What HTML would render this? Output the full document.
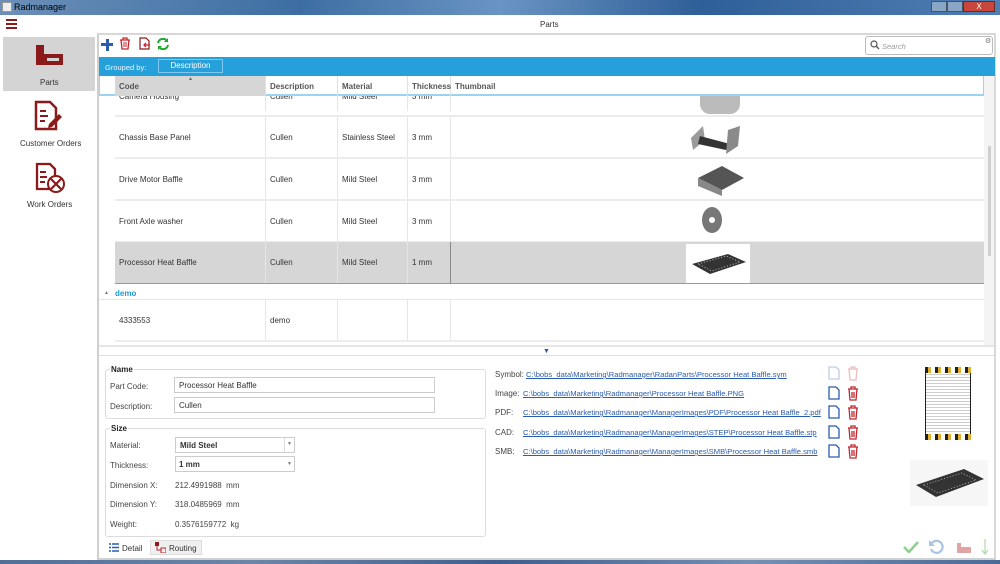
<!DOCTYPE html>
<html><head><meta charset="utf-8"><style>
*{margin:0;padding:0;box-sizing:border-box}
body{width:1000px;height:564px;overflow:hidden;background:#fff;font-family:"Liberation Sans",sans-serif;font-size:8px;color:#333;position:relative}
.a{position:absolute}
.t{position:absolute;white-space:nowrap}
.lnk{color:#2a5db0;text-decoration:underline;font-size:7.6px}
.hd{position:absolute;top:76px;height:20px;border-right:1px solid #e0e0e0;font-weight:bold;color:#555;padding:6px 4px;font-size:8px}
.row{position:absolute;left:115px;width:869px;border-bottom:2px solid #ececec}
.c{position:absolute;top:0;height:100%;border-right:1px solid #e6e6e6;padding-left:4px;display:flex;align-items:center;font-size:8px;color:#333}
.lbl{position:absolute;font-size:8px;color:#444}
.box{position:absolute;border:1px solid #dcdcdc;border-radius:3px}
</style></head><body>
<div class="a" style="left:0;top:0;width:1000px;height:15px;background:linear-gradient(90deg,#6b8fb8 0%,#3d6ea3 30%,#6a94c2 50%,#2f5f98 70%,#4f7eb3 100%)"></div>
<div class="a" style="left:2px;top:2px;width:10px;height:10px;background:#eee;border:1px solid #999"></div>
<div class="t" style="left:14px;top:2px;font-size:9px;color:#000">Radmanager</div>
<div class="a" style="left:931px;top:1px;width:16px;height:11px;background:#8aa6c6;border:1px solid #456"></div>
<div class="a" style="left:947px;top:1px;width:16px;height:11px;background:#8aa6c6;border:1px solid #456"></div>
<div class="a" style="left:963px;top:1px;width:32px;height:11px;background:#c8463a;border:1px solid #6a2a22;color:#fff;font-size:8px;text-align:center;line-height:9px">X</div>
<div class="a" style="left:6px;top:19px;width:11px;height:2px;background:#8b1a1a"></div>
<div class="a" style="left:6px;top:23px;width:11px;height:2px;background:#8b1a1a"></div>
<div class="a" style="left:6px;top:27px;width:11px;height:2px;background:#8b1a1a"></div>
<div class="t" style="left:540px;top:20px;font-size:8px">Parts</div>
<div class="a" style="left:3px;top:37px;width:92px;height:54px;background:#d4d4d4"></div>
<div class="a" style="left:36px;top:45px;width:8px;height:20px;background:#8b1a1a"></div>
<div class="a" style="left:36px;top:54px;width:27px;height:11px;background:#8b1a1a"></div>
<div class="a" style="left:47px;top:58px;width:12px;height:3px;background:#d4d4d4"></div>
<div class="t" style="left:40px;top:78px">Parts</div>
<svg class="a" style="left:33px;top:100px" width="32" height="32" viewBox="0 0 32 32"><path d="M3 2h14l6 6v21H3z" fill="none" stroke="#8b1a1a" stroke-width="2.5"/><path d="M7 11h6M7 16h8M7 21h5" stroke="#8b1a1a" stroke-width="2"/><path d="M16 24l10-10 3 3-10 10-4 1z" fill="#8b1a1a"/></svg>
<div class="t" style="left:20px;top:139px">Customer Orders</div>
<svg class="a" style="left:34px;top:162px" width="32" height="32" viewBox="0 0 32 32"><path d="M3 2h13l5 5v20H3z" fill="none" stroke="#8b1a1a" stroke-width="2.3"/><path d="M6 10h6M6 15h7M6 20h5" stroke="#8b1a1a" stroke-width="2"/><circle cx="22" cy="22" r="8" fill="#fff" stroke="#8b1a1a" stroke-width="2"/><path d="M17 17l10 10M27 17l-10 10" stroke="#8b1a1a" stroke-width="2.2"/></svg>
<div class="t" style="left:27px;top:200px">Work Orders</div>
<div class="a" style="left:97px;top:33px;width:2px;height:531px;background:#cfcfcf"></div>
<div class="a" style="left:98px;top:33px;width:898px;height:2px;background:#d8d8d8"></div>
<div class="a" style="left:994px;top:33px;width:2px;height:527px;background:#d8d8d8"></div>
<div class="a" style="left:101px;top:43px;width:12px;height:3px;background:#2a5db0"></div>
<div class="a" style="left:105.5px;top:38.5px;width:3px;height:12px;background:#2a5db0"></div>
<svg class="a" style="left:119px;top:37px" width="12" height="13" viewBox="0 0 12 13"><path d="M1 3h10M4 3V1h4v2M2 3l1 9h6l1-9" fill="none" stroke="#c0262d" stroke-width="1.3"/><path d="M5 5v5M7 5v5" stroke="#c0262d"/></svg>
<svg class="a" style="left:138px;top:37px" width="13" height="13" viewBox="0 0 13 13"><path d="M2 1h6l3 3v8H2z" fill="none" stroke="#8b1a1a" stroke-width="1.2"/><path d="M12 8H6M8 6l-2 2 2 2" fill="none" stroke="#c0262d" stroke-width="1.3"/></svg>
<svg class="a" style="left:156px;top:37px" width="14" height="14" viewBox="0 0 14 14"><path d="M2 6a5 5 0 0 1 9-2M12 8a5 5 0 0 1-9 2" fill="none" stroke="#1fa82a" stroke-width="2"/><path d="M12 1v4H8zM2 13V9h4z" fill="#1fa82a"/></svg>
<div class="box" style="left:865px;top:36px;width:128px;height:19px;border-color:#bbb"></div>
<svg class="a" style="left:870px;top:40px" width="10" height="10" viewBox="0 0 10 10"><circle cx="4" cy="4" r="3" fill="none" stroke="#555" stroke-width="1.2"/><path d="M6 6l3 3" stroke="#555" stroke-width="1.3"/></svg>
<div class="t" style="left:882px;top:42px;color:#999;font-style:italic;font-size:7.5px">Search</div>
<div class="t" style="left:985px;top:37px;color:#777;font-size:7px">⚙</div>
<div class="a" style="left:99px;top:57px;width:896px;height:19px;background:#26a0da"></div>
<div class="t" style="left:105px;top:63px;color:#eaf6fd;font-size:7.5px">Grouped by:</div>
<div class="a" style="left:158px;top:59px;width:65px;height:14px;border:1px solid #7cc8ee;color:#fff;font-size:8px;text-align:center;line-height:12px">Description</div>
<div class="a" style="left:99px;top:76px;width:885px;height:20px;background:#fff;border-bottom:2px solid #9bd4f0;border-left:1px solid #9bd4f0"></div>
<div class="hd" style="left:115px;width:151px;background:#d6d6d6">Code</div>
<div class="t" style="left:188px;top:76px;font-size:5px;color:#666">▲</div>
<div class="hd" style="left:266px;width:72px">Description</div>
<div class="hd" style="left:338px;width:70px">Material</div>
<div class="hd" style="left:408px;width:43px">Thickness</div>
<div class="hd" style="left:451px;width:533px;border-right:1px solid #9bd4f0">Thumbnail</div>
<div class="a" style="left:99px;top:96px;width:16px;height:189px;background:#fff"></div>
<div class="row" style="top:96px;height:21px;overflow:hidden"><div class="c" style="left:0;width:151px;align-items:flex-start;margin-top:-4px">Camera Housing</div><div class="c" style="left:151px;width:72px;align-items:flex-start;margin-top:-4px">Cullen</div><div class="c" style="left:223px;width:70px;align-items:flex-start;margin-top:-4px">Mild Steel</div><div class="c" style="left:293px;width:43px;align-items:flex-start;margin-top:-4px">3 mm</div><div class="a" style="left:585px;top:0;width:40px;height:18px;background:#bbb;border-radius:0 0 10px 10px"></div></div>
<div class="row" style="top:117px;height:42px"><div class="c" style="left:0;width:151px">Chassis Base Panel</div><div class="c" style="left:151px;width:72px">Cullen</div><div class="c" style="left:223px;width:70px">Stainless Steel</div><div class="c" style="left:293px;width:43px">3 mm</div><svg class="a" style="left:573px;top:3px" width="56" height="36"><path d="M3 18l12-12 2 14-12 10z" fill="#9a9a9a"/><path d="M12 16l30 8-4 6-28-6z" fill="#333"/><path d="M40 10l12-4-2 20-12 8z" fill="#8a8a8a"/></svg></div>
<div class="row" style="top:159px;height:42px"><div class="c" style="left:0;width:151px">Drive Motor Baffle</div><div class="c" style="left:151px;width:72px">Cullen</div><div class="c" style="left:223px;width:70px">Mild Steel</div><div class="c" style="left:293px;width:43px">3 mm</div><svg class="a" style="left:573px;top:3px" width="60" height="38"><path d="M10 16l24-12 22 12-22 12z" fill="#555"/><path d="M10 16l24 12 0 6-24-10z" fill="#888"/></svg></div>
<div class="row" style="top:201px;height:42px"><div class="c" style="left:0;width:151px">Front Axle washer</div><div class="c" style="left:151px;width:72px">Cullen</div><div class="c" style="left:223px;width:70px">Mild Steel</div><div class="c" style="left:293px;width:43px">3 mm</div><svg class="a" style="left:585px;top:4px" width="30" height="32"><ellipse cx="12" cy="15" rx="10" ry="13" fill="#777"/><circle cx="12" cy="15" r="3" fill="#fff"/></svg></div>
<div class="row" style="top:242px;height:42px;background:#d6d6d6;border-bottom:1px solid #999"><div class="c" style="left:0;width:151px">Processor Heat Baffle</div><div class="c" style="left:151px;width:72px">Cullen</div><div class="c" style="left:223px;width:70px">Mild Steel</div><div class="c" style="left:293px;width:43px;border-right:1px solid #888">1 mm</div><div class="a" style="left:571px;top:2px;width:64px;height:39px;background:#fff"></div><svg class="a" style="left:573px;top:6px" width="60" height="30"><path d="M4 16l36-10 18 8-36 12z" fill="#333"/><path d="M10 16l28-8 14 6-28 9z" fill="none" stroke="#bbb" stroke-dasharray="1 2"/></svg></div>
<div class="t" style="left:104px;top:290px;font-size:5px;color:#777">▲</div>
<div class="t" style="left:115px;top:289px;color:#1e9ad6;font-weight:bold;font-size:8px">demo</div>
<div class="a" style="left:99px;top:299px;width:885px;height:1px;background:#e6e6e6"></div>
<div class="row" style="top:300px;height:42px"><div class="c" style="left:0;width:151px">4333553</div><div class="c" style="left:151px;width:72px">demo</div><div class="c" style="left:223px;width:70px"></div><div class="c" style="left:293px;width:43px"></div></div>
<div class="a" style="left:984px;top:76px;width:10px;height:270px;background:#f4f4f4"></div>
<div class="a" style="left:988px;top:146px;width:3px;height:110px;background:#cfcfcf"></div>
<div class="a" style="left:99px;top:345px;width:895px;height:2px;background:#e6e6e6"></div>
<div class="t" style="left:543px;top:348px;color:#2a5db0;font-size:7px">▼</div>
<div class="a" style="left:99px;top:355px;width:895px;height:1px;background:#e0e0e0"></div>
<div class="box" style="left:105px;top:369px;width:381px;height:50px"></div>
<div class="t" style="left:110px;top:365px;font-weight:bold;background:#fff;padding:0 1px;color:#222">Name</div>
<div class="lbl" style="left:110px;top:382px">Part Code:</div>
<div class="a" style="left:174px;top:377px;width:261px;height:16px;border:1px solid #ccc;padding:3px 4px;font-size:8px">Processor Heat Baffle</div>
<div class="lbl" style="left:110px;top:402px">Description:</div>
<div class="a" style="left:174px;top:397px;width:261px;height:16px;border:1px solid #ccc;padding:3px 4px;font-size:8px">Cullen</div>
<div class="box" style="left:105px;top:428px;width:381px;height:109px"></div>
<div class="t" style="left:110px;top:424px;font-weight:bold;background:#fff;padding:0 1px;color:#222">Size</div>
<div class="lbl" style="left:110px;top:441px">Material:</div>
<div class="a" style="left:175px;top:437px;width:120px;height:16px;border:1px solid #ccc;padding:3px 4px;font-size:8px;font-weight:bold">Mild Steel</div>
<div class="a" style="left:284px;top:438px;width:1px;height:14px;background:#ddd"></div>
<div class="t" style="left:287px;top:441px;font-size:5px;color:#777">▼</div>
<div class="lbl" style="left:110px;top:461px">Thickness:</div>
<div class="a" style="left:175px;top:456px;width:120px;height:16px;border:1px solid #ccc;padding:3px 3px;font-size:8px;font-weight:bold">1 mm</div>
<div class="t" style="left:287px;top:461px;font-size:5px;color:#777">▼</div>
<div class="lbl" style="left:110px;top:481px">Dimension X:</div><div class="lbl" style="left:175px;top:481px">212.4991988&nbsp; mm</div>
<div class="lbl" style="left:110px;top:500px">Dimension Y:</div><div class="lbl" style="left:175px;top:500px">318.0485969&nbsp; mm</div>
<div class="lbl" style="left:110px;top:520px">Weight:</div><div class="lbl" style="left:175px;top:520px">0.3576159772&nbsp; kg</div>
<svg class="a" style="left:109px;top:543px" width="10" height="9"><path d="M0 1h2M0 4.5h2M0 8h2M3 1h7M3 4.5h7M3 8h7" stroke="#2a5db0" stroke-width="1.6"/></svg>
<div class="t" style="left:122px;top:544px">Detail</div>
<div class="a" style="left:150px;top:540px;width:52px;height:15px;background:#f0f0f0;border:1px solid #ddd"></div>
<svg class="a" style="left:155px;top:542px" width="11" height="11"><rect x="0" y="0" width="4" height="4" fill="#8b1a1a"/><rect x="6" y="6" width="5" height="5" fill="none" stroke="#c0262d"/><path d="M2 4v4h4" stroke="#c0262d" fill="none"/></svg>
<div class="t" style="left:169px;top:544px">Routing</div>
<div class="lbl" style="left:495px;top:370px">Symbol:</div><div class="t lnk" style="left:526px;top:370px">C:\bobs_data\Marketing\Radmanager\RadanParts\Processor Heat Baffle.sym</div>
<div class="lbl" style="left:495px;top:389px">Image:</div><div class="t lnk" style="left:523px;top:389px">C:\bobs_data\Marketing\Radmanager\Processor Heat Baffle.PNG</div>
<div class="lbl" style="left:495px;top:408px">PDF:</div><div class="t lnk" style="left:523px;top:408px">C:\bobs_data\Marketing\Radmanager\ManagerImages\PDF\Processor Heat Baffle_2.pdf</div>
<div class="lbl" style="left:495px;top:428px">CAD:</div><div class="t lnk" style="left:523px;top:428px">C:\bobs_data\Marketing\Radmanager\ManagerImages\STEP\Processor Heat Baffle.stp</div>
<div class="lbl" style="left:495px;top:447px">SMB:</div><div class="t lnk" style="left:523px;top:447px">C:\bobs_data\Marketing\Radmanager\ManagerImages\SMB\Processor Heat Baffle.smb</div>
<svg class="a" style="left:827px;top:365px" width="36" height="100" viewBox="0 0 36 100">
<g opacity="0.3"><path d="M2 2h7l3 3v9H2z" fill="none" stroke="#2a5db0" stroke-width="1.3"/><path d="M21 4h10M24 4V2h4v2M22 4l1 11h6l1-11" fill="none" stroke="#c0262d" stroke-width="1.3"/></g>
<g transform="translate(0,20)"><path d="M2 2h7l3 3v9H2z" fill="none" stroke="#2a5db0" stroke-width="1.3"/><path d="M21 4h10M24 4V2h4v2M22 4l1 11h6l1-11M25 7v6M27 7v6" fill="none" stroke="#c0262d" stroke-width="1.3"/></g>
<g transform="translate(0,39)"><path d="M2 2h7l3 3v9H2z" fill="none" stroke="#2a5db0" stroke-width="1.3"/><path d="M21 4h10M24 4V2h4v2M22 4l1 11h6l1-11M25 7v6M27 7v6" fill="none" stroke="#c0262d" stroke-width="1.3"/></g>
<g transform="translate(0,59)"><path d="M2 2h7l3 3v9H2z" fill="none" stroke="#2a5db0" stroke-width="1.3"/><path d="M21 4h10M24 4V2h4v2M22 4l1 11h6l1-11M25 7v6M27 7v6" fill="none" stroke="#c0262d" stroke-width="1.3"/></g>
<g transform="translate(0,78)"><path d="M2 2h7l3 3v9H2z" fill="none" stroke="#2a5db0" stroke-width="1.3"/><path d="M21 4h10M24 4V2h4v2M22 4l1 11h6l1-11M25 7v6M27 7v6" fill="none" stroke="#c0262d" stroke-width="1.3"/></g>
</svg>
<div class="a" style="left:925px;top:370px;width:46px;height:66px;border:1.5px solid #222;background:repeating-linear-gradient(0deg,#ccc 0 1px,#fff 1px 3px)"></div>
<div class="a" style="left:925px;top:367px;width:46px;height:6px;background:repeating-linear-gradient(90deg,#222 0 3px,#e0b030 3px 6px,#fff 6px 10px)"></div>
<div class="a" style="left:925px;top:434px;width:46px;height:6px;background:repeating-linear-gradient(90deg,#222 0 3px,#e0b030 3px 6px,#fff 6px 10px)"></div>
<div class="a" style="left:910px;top:460px;width:78px;height:46px;background:#f6f6f6"></div>
<svg class="a" style="left:912px;top:463px" width="76" height="40"><path d="M4 22l48-16 20 10-48 18z" fill="#333"/><path d="M12 22l38-12 14 7-38 13z" fill="none" stroke="#aaa" stroke-dasharray="1 2"/></svg>
<svg class="a" style="left:903px;top:541px" width="16" height="12"><path d="M1 6l5 5 9-10" fill="none" stroke="#8fcf8f" stroke-width="2.5"/></svg>
<svg class="a" style="left:928px;top:539px" width="16" height="16"><path d="M4 4a6 6 0 1 1-1 6" fill="none" stroke="#a9c3e6" stroke-width="2.2"/><path d="M1 1v6h6z" fill="#a9c3e6"/></svg>
<div class="a" style="left:957px;top:543px;width:4px;height:10px;background:#e0a4a4"></div>
<div class="a" style="left:957px;top:547px;width:14px;height:6px;background:#e0a4a4"></div>
<svg class="a" style="left:980px;top:539px" width="10" height="17"><path d="M5 0v15M2 11l3 4 3-4" fill="none" stroke="#b8d8b0" stroke-width="1.3"/></svg>
<div class="a" style="left:98px;top:558px;width:898px;height:2px;background:#d0d0d0"></div>
<div class="a" style="left:0;top:560px;width:1000px;height:4px;background:linear-gradient(90deg,#4f6f99,#6b86a8,#3d5f8f,#7390b4,#4a6b98)"></div>
</body></html>
